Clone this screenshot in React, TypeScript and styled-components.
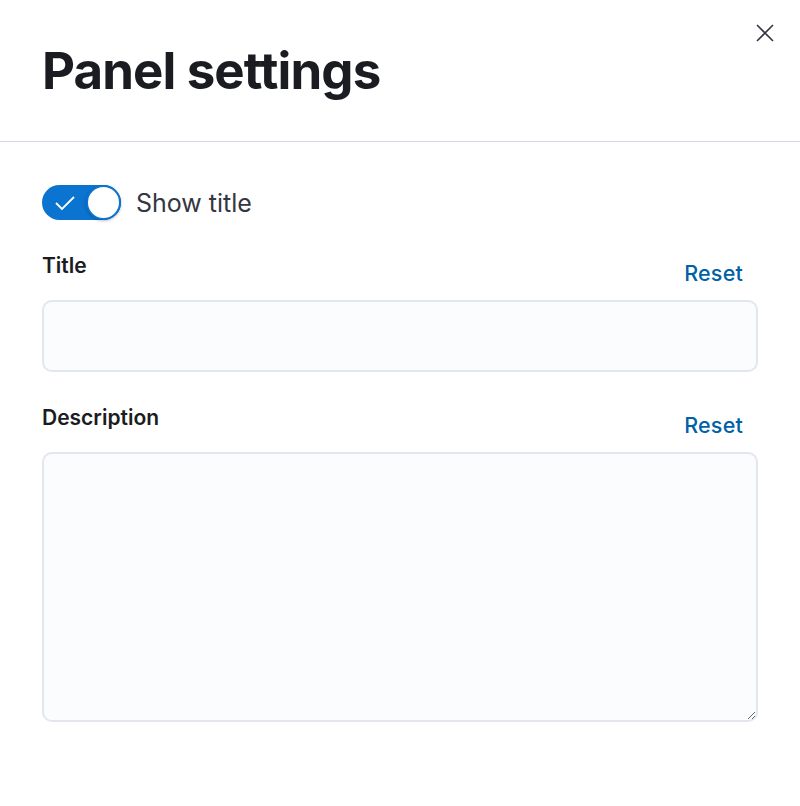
import React, { useState } from "react";
import styled, { createGlobalStyle } from "styled-components";

const GlobalStyle = createGlobalStyle`
  html, body {
    margin: 0;
    padding: 0;
    background: #ffffff;
    font-family: Inter, "Noto Sans", sans-serif;
    color: #1a1c21;
  }
`;

function App() {
  const [showTitle, setShowTitle] = useState(true);

  return (
    <>
      <GlobalStyle />
      <Flyout>
        <Header>
          <Heading>Panel settings</Heading>
          <CloseButton aria-label="Close">
            <svg width="20" height="20" viewBox="0 0 20 20" fill="none">
              <path d="M2 2 L18 18 M18 2 L2 18" stroke="#343741" strokeWidth="1.6" />
            </svg>
          </CloseButton>
        </Header>
        <Body>
          <SwitchRow onClick={() => setShowTitle(!showTitle)}>
            <SwitchTrack on={showTitle}>
              <svg width="22" height="16" viewBox="0 0 22 16" fill="none">
                <path d="M2 8 L8 14 L20 2" stroke="#ffffff" strokeWidth="1.8" />
              </svg>
              <Knob on={showTitle} />
            </SwitchTrack>
            <SwitchLabel>Show title</SwitchLabel>
          </SwitchRow>

          <Field>
            <LabelRow>
              <Label>Title</Label>
              <ResetLink>Reset</ResetLink>
            </LabelRow>
            <TextInput />
          </Field>

          <Field>
            <LabelRow>
              <Label>Description</Label>
              <ResetLink>Reset</ResetLink>
            </LabelRow>
            <TextArea />
          </Field>
        </Body>
      </Flyout>
    </>
  );
}

export default App;

const Flyout = styled.div`
  width: 800px;
  height: 806px;
  display: flex;
  flex-direction: column;
`;

const Header = styled.div`
  position: relative;
  height: 142px;
  box-sizing: border-box;
  padding: 38px 42px 0 42px;
  border-bottom: 1px solid #d3dae6;
`;

const Heading = styled.h1`
  margin: 0;
  font-size: 51px;
  line-height: 66px;
  font-weight: 700;
  letter-spacing: -0.9px;
  color: #1a1c21;
`;

const CloseButton = styled.button`
  position: absolute;
  top: 23px;
  right: 25px;
  width: 20px;
  height: 20px;
  padding: 0;
  border: none;
  background: transparent;
  display: flex;
`;

const Body = styled.div`
  padding: 43px 42px 0 42px;
  display: flex;
  flex-direction: column;
`;

const SwitchRow = styled.div`
  display: flex;
  align-items: center;
  gap: 15px;
  cursor: pointer;
`;

const SwitchTrack = styled.div<{ on: boolean }>`
  width: 79px;
  height: 35px;
  border-radius: 18px;
  box-sizing: border-box;
  background: ${(p) => (p.on ? "#0b74d0" : "#98a2b3")};
  display: flex;
  align-items: center;
  justify-content: space-between;
  padding: 0 0 0 12px;
`;

const Knob = styled.div<{ on: boolean }>`
  width: 35px;
  height: 35px;
  border-radius: 50%;
  box-sizing: border-box;
  background: #ffffff;
  border: 2px solid #0b74d0;
  box-shadow: 0 1px 3px rgba(0, 0, 0, 0.25);
`;

const SwitchLabel = styled.span`
  font-size: 25px;
  color: #343741;
`;

const Field = styled.div`
  display: flex;
  flex-direction: column;
  margin-top: 33px;
`;

const LabelRow = styled.div`
  display: flex;
  justify-content: space-between;
  align-items: flex-end;
  padding-right: 15px;
  margin-bottom: 14px;
`;

const Label = styled.label`
  font-size: 21px;
  font-weight: 600;
  color: #1a1c21;
  padding-bottom: 8px;
`;

const ResetLink = styled.span`
  font-size: 21.5px;
  font-weight: 500;
  letter-spacing: 0.2px;
  color: #0061a6;
`;

const TextInput = styled.input`
  height: 72px;
  box-sizing: border-box;
  border: 2px solid #e3e6ef;
  border-radius: 10px;
  background: #fbfcfd;
  outline: none;
`;

const TextArea = styled.textarea`
  height: 270px;
  box-sizing: border-box;
  border: 2px solid #e3e6ef;
  border-radius: 10px;
  background: #fbfcfd;
  outline: none;
  resize: vertical;
`;
